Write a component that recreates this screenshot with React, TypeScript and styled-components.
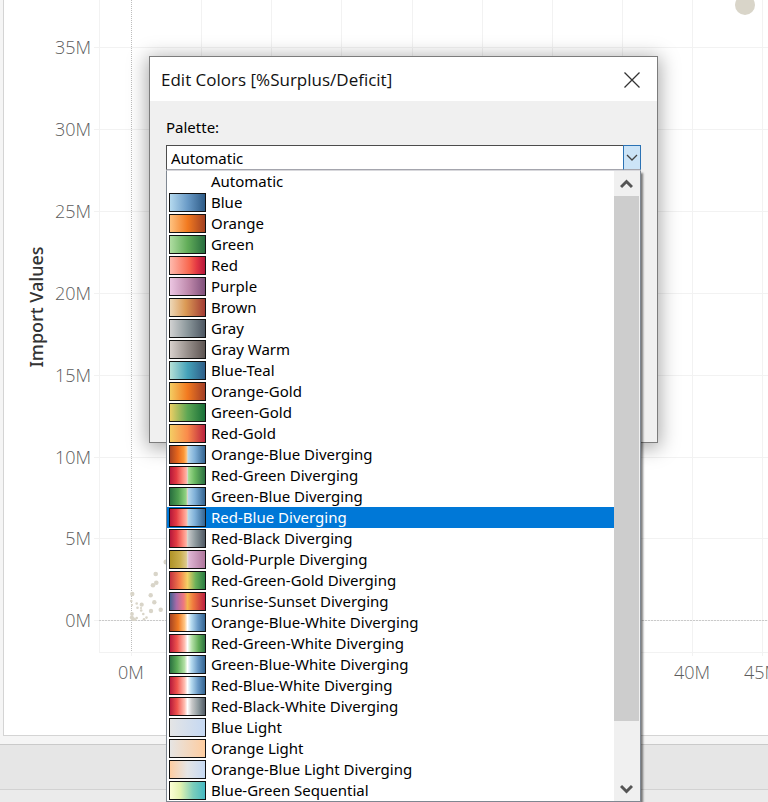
import React, { useState } from "react";
import styled, { createGlobalStyle } from "styled-components";

const GlobalStyle = createGlobalStyle`
  * { box-sizing: border-box; }
  body { margin: 0; background: #f5f5f5; overflow: hidden; }
  button, select { font: inherit; color: inherit; }
`;

const uiFont = `"Noto Sans", "Open Sans", sans-serif`;

const Workbook = styled.div`
  position: relative;
  display: flex;
  flex-direction: column;
  min-height: 100vh;
  overflow: hidden;
  font-family: ${uiFont};
`;

const Sheet = styled.main`
  display: flex;
  margin-left: 3px;
  margin-bottom: 8px;
  background: #fff;
  border-left: 1px solid #d4d4d4;
  border-bottom: 1px solid #d4d4d4;
`;

const Plot = styled.svg`
  flex: 1;
  min-width: 0;
  height: 735px;
  display: block;
  font-family: "Open Sans", sans-serif;
`;

const TickLabel = styled.text`
  font-size: 18px;
  font-weight: 300;
  fill: #5c5c5c;
`;

const AxisTitle = styled.text`
  font-family: ${uiFont};
  font-size: 18px;
  font-weight: 500;
  fill: #333;
`;

const TabStrip = styled.div`
  height: 46px;
  background: #e6e6e6;
  border-top: 1px solid #cacaca;
  border-bottom: 1px solid #d2d2d2;
`;

const StatusBar = styled.footer`
  flex: 1;
  min-height: 12px;
  background: #ebebeb;
`;

const Overlay = styled.div`
  position: absolute;
  inset: 0;
  padding: 56px 110px 0 149px;
`;

const Dialog = styled.section`
  min-height: 387px;
  background: #f0f0f0;
  border: 1px solid #7c7c7c;
  box-shadow: 0 3px 18px 2px rgba(0, 0, 0, 0.34);
`;

const TitleBar = styled.header`
  display: flex;
  align-items: center;
  justify-content: space-between;
  height: 44px;
  padding: 1px 9px 0 11px;
  background: #fff;
`;

const Title = styled.h1`
  margin: 0;
  font: 400 17px/24px "Open Sans", sans-serif;
  color: #111;
`;

const CloseButton = styled.button`
  display: flex;
  align-items: center;
  justify-content: center;
  width: 32px;
  height: 32px;
  padding: 0;
  border: 0;
  background: none;
`;

const DialogBody = styled.div`
  padding: 14px 16px;
`;

const FieldLabel = styled.label`
  display: block;
  height: 30px;
  font-size: 15px;
  line-height: 24px;
  color: #000;
`;

const Combo = styled.div`
  position: relative;
  display: flex;
  height: 25px;
`;

const ComboSelect = styled.select`
  flex: 1;
  min-width: 0;
  appearance: none;
  padding: 1px 4px 0;
  border: 1px solid #4c4c4c;
  border-bottom-color: #a4a5ad;
  border-right: 0;
  border-radius: 0;
  outline: 0;
  background: #fff;
  color: #000;
  font-size: 15px;
  line-height: 22px;
`;

const ComboArrow = styled.button`
  display: flex;
  align-items: center;
  justify-content: center;
  width: 18px;
  padding: 0;
  border: 1px solid #2b72b4;
  border-bottom-color: #a4a5ad;
  background: #cce4f7;
`;

const Popup = styled.div`
  position: absolute;
  top: 25px;
  left: 0;
  right: 0;
  z-index: 1;
  display: flex;
  background: #fff;
  border: 1px solid #7f8791;
  border-top-color: #d8d8dc;
  box-shadow: 2px 3px 2px rgba(0, 0, 0, 0.5);
`;

const Options = styled.ul`
  flex: 1;
  min-width: 0;
  margin: 0;
  padding: 0;
  list-style: none;
`;

const Option = styled.li<{ $active: boolean }>`
  display: flex;
  align-items: center;
  gap: 5px;
  height: 21px;
  padding-left: 2px;
  font-size: 15px;
  line-height: 21px;
  white-space: nowrap;
  cursor: default;
  color: ${(p) => (p.$active ? "#fff" : "#000")};
  background: ${(p) => (p.$active ? "#0078d7" : "transparent")};
`;

const Swatch = styled.span<{ $colors: string }>`
  width: 37px;
  height: 19px;
  flex: none;
  border: 1px solid ${(p) => (p.$colors ? "#111" : "transparent")};
  background: ${(p) => (p.$colors ? `linear-gradient(to right, ${p.$colors})` : "none")};
  background-origin: border-box;
`;

const Scrollbar = styled.div`
  display: flex;
  flex-direction: column;
  width: 26px;
  padding-right: 1px;
  background: #f0f0f0;
`;

const ScrollButton = styled.button`
  display: flex;
  align-items: center;
  justify-content: center;
  height: 25px;
  padding: 0;
  border: 0;
  background: #f0f0f0;
`;

const ScrollTrack = styled.div`
  flex: 1;
`;

const ScrollThumb = styled.div`
  height: 90.5%;
  background: #cdcdcd;
`;

const blueUp = "#d9d5c9 50%, #b5d7ec 52%, #7fb0d8 70%, #2b5c8a";
const greenUp = "#d9d5c9 50%, #a3dc90 53%, #69b761 70%, #24693d";
const blackUp = "#d9d5c9 50%, #c4c7c8 53%, #8b979b 72%, #49525e";
const redDown = "#ae123a, #e33b43 20%, #fc8375 36%, #ffb2a6 47%";
const orangeDown = "#9e3d22, #e8681c 24%, #fb9638 40%, #ffbe76 47%";
const greenDown = "#24693d, #4f9f50 25%, #93d484 46%";

const palettes: [string, string][] = [
  ["Automatic", ""],
  ["Blue", "#b9ddf1, #6a9bc7 50%, #2a5783"],
  ["Orange", "#ffc685, #f27a20 50%, #9e3d22"],
  ["Green", "#b3e0a6, #62ad59 50%, #24693d"],
  ["Red", "#ffbeb2, #f8674f 55%, #e33743 75%, #ae123a"],
  ["Purple", "#eec9e5, #bc86a9 55%, #7c4d79"],
  ["Brown", "#eedbbd, #db9a55 45%, #9f3632"],
  ["Gray", "#d5d5d5, #8b979b 50%, #49525e"],
  ["Gray Warm", "#dcd4d0, #98908c 50%, #59504e"],
  ["Blue-Teal", "#bce4d8, #45a2b9 50%, #2c5985"],
  ["Orange-Gold", "#f4d166, #f27a20 50%, #9e3a26"],
  ["Green-Gold", "#f4d166, #5da755 50%, #146c36"],
  ["Red-Gold", "#f4d166, #fa8b4b 50%, #b71d3e"],
  ["Orange-Blue Diverging", `${orangeDown}, ${blueUp}`],
  ["Red-Green Diverging", `${redDown}, ${greenUp}`],
  ["Green-Blue Diverging", `${greenDown}, ${blueUp}`],
  ["Red-Blue Diverging", `${redDown}, ${blueUp}`],
  ["Red-Black Diverging", `${redDown}, ${blackUp}`],
  ["Gold-Purple Diverging", "#ad9024, #c9ae4c 30%, #ddc98c 47%, #e3d8cf 50%, #dfb6d4 54%, #ac7299"],
  ["Red-Green-Gold Diverging", "#be2a3e, #f57a4a 28%, #f4d166 50%, #6bb05a 72%, #22763f"],
  ["Sunrise-Sunset Diverging", "#33608c, #a86aa8 20%, #f0787e 40%, #f5b350 50%, #ef7a3f 65%, #b81840"],
  ["Orange-Blue-White Diverging", "#9e3d22, #f07a22 25%, #ffc685 42%, #fff 50%, #b9ddf1 60%, #6a9bc7 78%, #2b5c8a"],
  ["Red-Green-White Diverging", "#ae123a, #f0544d 22%, #ffbeb2 42%, #fff 50%, #b3e0a6 62%, #62ad59 80%, #24693d"],
  ["Green-Blue-White Diverging", "#24693d, #5dad58 22%, #b3e0a6 42%, #fff 50%, #b9ddf1 60%, #6a9bc7 78%, #2b5c8a"],
  ["Red-Blue-White Diverging", "#ae123a, #f0544d 22%, #ffbeb2 42%, #fff 50%, #b9ddf1 60%, #6a9bc7 78%, #2b5c8a"],
  ["Red-Black-White Diverging", "#ae123a, #f0544d 22%, #ffbeb2 42%, #fff 50%, #c8c9c9 62%, #8b979b 80%, #49525e"],
  ["Blue Light", "#e5e5e5, #c4d8f3"],
  ["Orange Light", "#e5e5e5, #ffcc9e"],
  ["Orange-Blue Light Diverging", "#ffcc9e, #e5e5e5 50%, #c4d8f3"],
  ["Blue-Green Sequential", "#feffd9, #e4f3b0 30%, #7ccdbb 65%, #41b7c4"],
];

const yTicks: [string, number][] = [
  ["35M", 47], ["30M", 129], ["25M", 211], ["20M", 293],
  ["15M", 375], ["10M", 457], ["5M", 538], ["0M", 620],
];
const columns = [201, 271, 341, 412, 482, 552, 622, 692, 762];
const xTicks: [string, number][] = [["0M", 131], ["40M", 692], ["45M", 762]];

const marks: [number, number, number][] = [
  [745, 5, 10], [166, 562, 2.5], [155.7, 574, 2.3], [156.3, 582.7, 2.3], [153, 585.3, 2.3],
  [150.7, 595.3, 2.2], [154.3, 602.3, 2.2], [151, 611, 2.2], [160.7, 609.7, 2.2],
  [132.3, 594, 2.2], [141.7, 604.7, 2.1], [136.7, 603.5, 1.3], [137.5, 607.7, 1.3],
  [141.2, 610.5, 1.3], [131.3, 601, 1.3], [132, 614, 1.9], [131.8, 617.5, 2],
  [133, 619, 2], [136.7, 618, 1.3], [143.3, 614, 1.3], [146.5, 617.6, 1.3],
  [144, 619.2, 1.3], [135, 619.5, 1.5], [141, 608, 1.1], [132, 605, 1.1],
];

function ScatterPlot() {
  return (
    <Plot viewBox="4 0 764 735" preserveAspectRatio="xMinYMin slice" role="img" aria-label="Import Values scatter plot">
      <g fill="#f2f2f2">
        {yTicks.map(([label, y]) => (
          <rect key={label} x="94" y={y} width="2000" height="1" />
        ))}
        {columns.map((x) => (
          <rect key={x} x={x} y="0" width="1" height="656" />
        ))}
        <rect x="99" y="0" width="1" height="653" />
        <rect x="99" y="652" width="2000" height="1" />
        <rect x="131" y="652" width="1" height="4" />
      </g>
      <g stroke="#bdbdbd" strokeWidth="1">
        <path d="M131.500 0V652" strokeDasharray="1 1" />
        <path d="M99 620.500H2000" stroke="#cacaca" strokeDasharray="2 1" />
      </g>
      {marks.map(([x, y, r], i) => (
        <circle key={i} cx={x} cy={y} r={r} fill="#d9d5c9" />
      ))}
      {yTicks.map(([label, y]) => (
        <TickLabel key={label} x="91" y={y + 7} textAnchor="end">{label}</TickLabel>
      ))}
      {xTicks.map(([label, x]) => (
        <TickLabel key={label} x={x} y="679" textAnchor="middle">{label}</TickLabel>
      ))}
      <AxisTitle transform="translate(43 307) rotate(-90)" textAnchor="middle">Import Values</AxisTitle>
    </Plot>
  );
}

function Chevron({ up = false }: { up?: boolean }) {
  return (
    <svg width="13" height="10" viewBox="0 0 13 10" fill="none" stroke="#555" strokeWidth="3" aria-hidden="true">
      <path d={up ? "M1 8L6.500 2.500L12 8" : "M1 2L6.500 7.500L12 2"} />
    </svg>
  );
}

export default function App() {
  const [value, setValue] = useState("Automatic");
  const [active, setActive] = useState("Red-Blue Diverging");
  const [open, setOpen] = useState(true);

  return (
    <>
      <GlobalStyle />
      <Workbook>
        <Sheet>
          <ScatterPlot />
        </Sheet>
        <TabStrip />
        <StatusBar />
        <Overlay>
          <Dialog role="dialog" aria-labelledby="dialog-title">
            <TitleBar>
              <Title id="dialog-title">Edit Colors [%Surplus/Deficit]</Title>
              <CloseButton aria-label="Close">
                <svg width="16" height="16" viewBox="0 0 16 16" stroke="#333" strokeWidth="1.3" aria-hidden="true">
                  <path d="M.5.5L15.500 15.500M15.500.5L.5 15.500" />
                </svg>
              </CloseButton>
            </TitleBar>
            <DialogBody>
              <FieldLabel htmlFor="palette">Palette:</FieldLabel>
              <Combo>
                <ComboSelect id="palette" value={value} onChange={(e) => setValue(e.target.value)}>
                  {palettes.map(([name]) => (
                    <option key={name}>{name}</option>
                  ))}
                </ComboSelect>
                <ComboArrow aria-label="Show palettes" aria-expanded={open} onClick={() => setOpen(!open)}>
                  <svg width="12" height="8" viewBox="0 0 12 8" fill="none" stroke="#444" strokeWidth="1.3" aria-hidden="true">
                    <path d="M1 1L6 6L11 1" />
                  </svg>
                </ComboArrow>
                {open && (
                  <Popup>
                    <Options role="listbox" aria-label="Palette">
                      {palettes.map(([name, colors]) => (
                        <Option
                          key={name}
                          role="option"
                          aria-selected={name === active}
                          $active={name === active}
                          onMouseEnter={() => setActive(name)}
                          onClick={() => {
                            setValue(name);
                            setOpen(false);
                          }}
                        >
                          <Swatch $colors={colors} />
                          {name}
                        </Option>
                      ))}
                    </Options>
                    <Scrollbar>
                      <ScrollButton aria-label="Scroll up"><Chevron up /></ScrollButton>
                      <ScrollTrack><ScrollThumb /></ScrollTrack>
                      <ScrollButton aria-label="Scroll down"><Chevron /></ScrollButton>
                    </Scrollbar>
                  </Popup>
                )}
              </Combo>
            </DialogBody>
          </Dialog>
        </Overlay>
      </Workbook>
    </>
  );
}
